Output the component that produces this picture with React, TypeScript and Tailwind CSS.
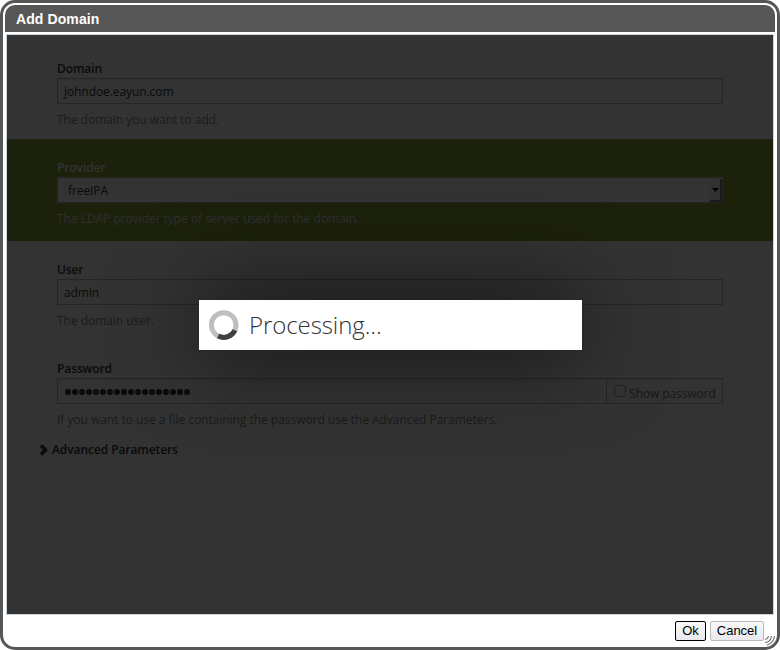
import React from "react";

const field =
  "h-[26px] border border-[#bbb] bg-white text-[12px] leading-[25px] tracking-[-0.08px] text-[#333] shadow-[inset_0_1px_1px_rgba(0,0,0,0.075)]";

function Row({
  label,
  help,
  active,
  className,
  children,
}: {
  label: string;
  help: string;
  active?: boolean;
  className: string;
  children: React.ReactNode;
}) {
  return (
    <section className={`pl-[50px] pr-[50px] ${active ? "bg-[#8aa33a]" : ""} ${className}`}>
      <div
        className={`h-[18px] text-[12px] font-semibold leading-[18px] tracking-[-0.1px] ${active ? "text-[#f5f5f5]" : "text-[#333]"}`}
      >
        {label}
      </div>
      {children}
      <p
        className={`mt-[7px] text-[12px] leading-[18px] tracking-[-0.038px] ${active ? "text-[#e4e4e4]" : "text-[#888]"}`}
      >
        {help}
      </p>
    </section>
  );
}

function Spinner() {
  return (
    <svg width="30" height="30" viewBox="0 0 30 30" fill="none" strokeWidth="5">
      <circle cx="14.7" cy="15" r="12.3" stroke="#bfbfbf" />
      <path d="M25.900 20.200A12.300 12.300 0 0 1 9.200 26.100" stroke="#404040" />
    </svg>
  );
}

export default function App() {
  return (
    <div className="h-[650px] w-[780px] overflow-hidden bg-white">
      <div className="relative flex h-[650px] w-[780px] flex-col rounded-[15px] border-[3px] border-[#565656] bg-white px-[2px] pt-[2px]">
        <header className="h-[27px] shrink-0 rounded-t-[10px] bg-[#575757] pl-[11px] font-['Liberation_Sans',sans-serif] text-[14px] font-bold leading-[28px] tracking-[0.1px] text-white">
          Add Domain
        </header>

        <div className="relative mx-px mt-[2px] h-[581px] shrink-0 overflow-hidden border border-[#c8d5de] bg-white font-['Open_Sans',sans-serif]">
          <Row label="Domain" help="The domain you want to add." className="h-[104px] pt-[25px]">
            <div className={`${field} pl-[6px]`}>johndoe.eayun.com</div>
          </Row>
          <Row
            label="Provider"
            help="The LDAP provider type of server used for the domain."
            active
            className="h-[102px] pt-[20px]"
          >
            <div className={`${field} flex justify-between pl-[10px]`}>
              freeIPA
              <span className="mt-px flex h-[23px] w-[12px] items-center justify-center border-b-2 border-r-2 border-[#888] bg-[#f4f4f4]">
                <svg width="7" height="4" viewBox="0 0 7 4">
                  <path d="M0 0h7L3.500 4z" fill="#000" />
                </svg>
              </span>
            </div>
          </Row>
          <Row label="User" help="The domain user." className="h-[99px] pt-[20px]">
            <div className={`${field} pl-[6px]`}>admin</div>
          </Row>
          <Row
            label="Password"
            help="If you want to use a file containing the password use the Advanced Parameters."
            className="h-[101px] pt-[20px]"
          >
            <div className="flex">
              <div className={`${field} flex w-[550px] items-center gap-px pl-[7px]`}>
                {Array.from({ length: 18 }, (_, i) => (
                  <span key={i} className="mt-[2px] h-[6px] w-[6px] rounded-full bg-[#333]" />
                ))}
              </div>
              <div className={`${field} -ml-px flex w-[117px] pl-[7px]`}>
                <span className="mt-[6px] mr-[3px] h-[12px] w-[12px] shrink-0 rounded-[3px] border border-[#a0a0a0]" />
                <span className="whitespace-nowrap pt-[2px] text-[#777]">Show password</span>
              </div>
            </div>
          </Row>
          <div className="flex h-[18px] items-center pl-[32px] text-[12px] font-semibold leading-[18px] tracking-[-0.08px] text-[#333]">
            <svg width="10" height="12" viewBox="0 0 10 12" className="mr-[3px]">
              <path d="M2 1.500L6.500 6l-4.500 4.500" stroke="#333" strokeWidth="3.500" fill="none" />
            </svg>
            Advanced Parameters
          </div>

          <div className="absolute inset-0 bg-black/80">
            <div className="absolute left-[192px] top-[265px] flex h-[50px] w-[383px] items-center bg-white pl-[10px] shadow-[0_0_90px_rgba(0,0,0,0.8)]">
              <Spinner />
              <span className="ml-[10px] text-[24px] font-light leading-[50px] tracking-[-0.08px] text-[#333]">
                Processing...
              </span>
            </div>
          </div>
        </div>

        <footer className="flex justify-end gap-[4px] pr-[11px] pt-[6px] font-['Liberation_Sans',sans-serif] text-[13px] leading-[18px] text-black">
          <button className="h-[20px] w-[31px] rounded-[2px] border border-black bg-linear-to-b from-[#f8f8f8] to-[#e9e9ee]">
            Ok
          </button>
          <button className="h-[20px] w-[54px] rounded-[2px] border border-[#bbb] bg-linear-to-b from-[#f8f8f8] to-[#e9e9ee]">
            Cancel
          </button>
        </footer>

        <svg
          className="absolute bottom-px right-0"
          width="14"
          height="14"
          viewBox="0 0 14 14"
          fill="none"
          stroke="#777"
          strokeWidth="1.2"
        >
          <path d="M2 7.500Q5 7 5.500 4M2 10.500Q8 10 8.500 4M4 13Q11 11 11.500 4" />
        </svg>
      </div>
    </div>
  );
}
